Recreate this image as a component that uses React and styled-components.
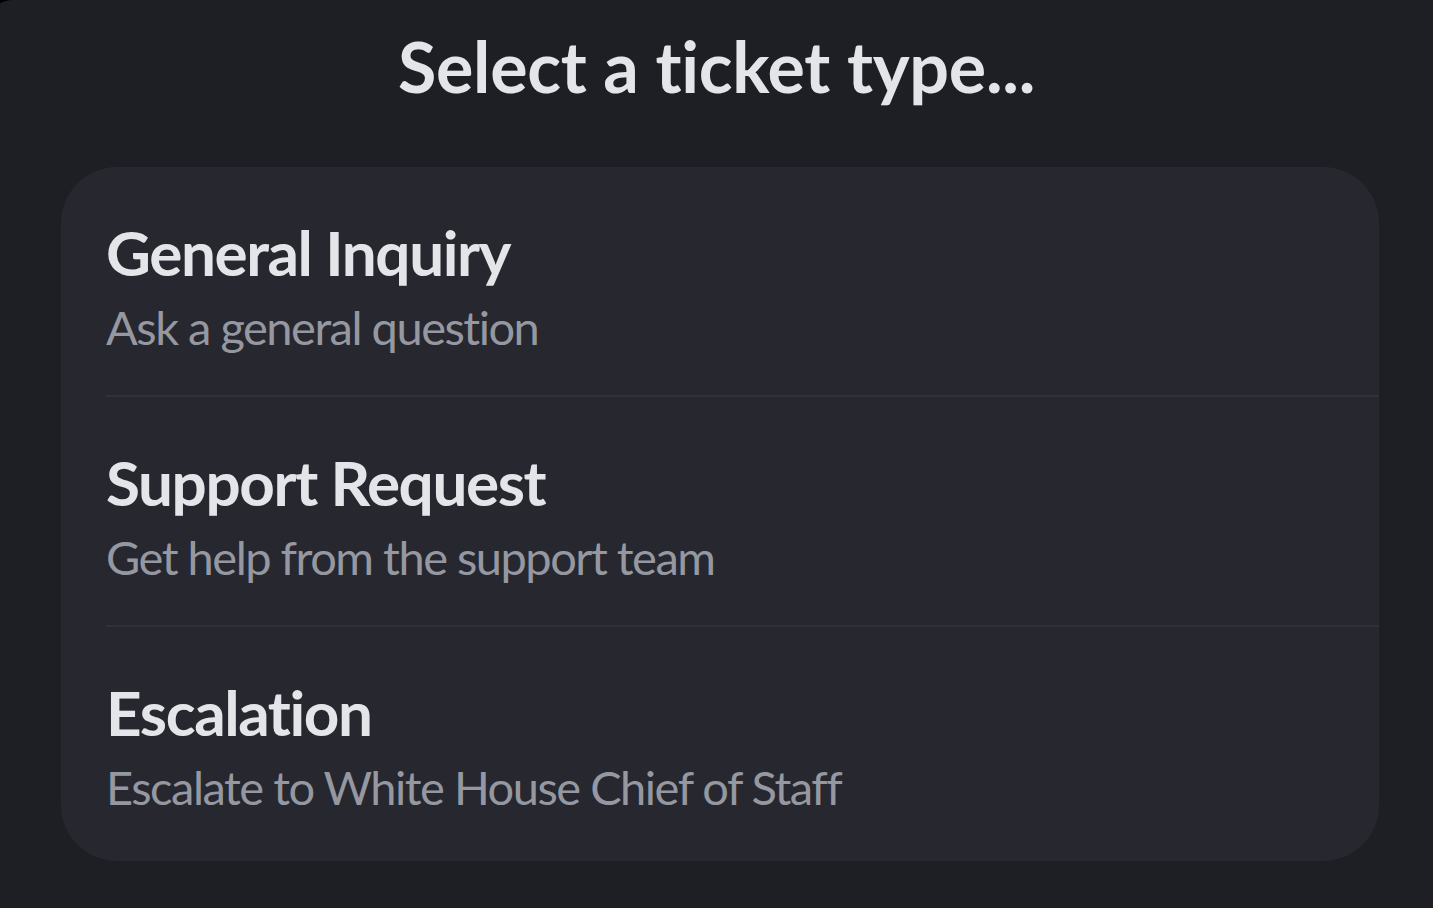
import React from "react";
import styled, { createGlobalStyle } from "styled-components";

const GlobalStyle = createGlobalStyle`
  html, body {
    margin: 0;
    padding: 0;
    background: #000;
    overflow: hidden;
  }
  #root {
    height: 908px;
  }
`;

const Sheet = styled.div`
  box-sizing: border-box;
  height: 908px;
  margin-left: -10px;
  padding-top: 24px;
  background: #1e1f24;
  border-top-left-radius: 22px;
  font-family: Lato, "Noto Sans", sans-serif;
  font-variant-ligatures: none;
  display: flex;
  flex-direction: column;
`;

const Title = styled.h1`
  margin: 0 0 0 10px;
  font-size: 70px;
  line-height: 84px;
  font-weight: 700;
  letter-spacing: -0.25px;
  color: #e4e5e9;
  text-align: center;
`;

const Card = styled.div`
  margin: 59px 54px 0 71px;
  padding-bottom: 6px;
  background: #27282f;
  border-radius: 56px;
  overflow: hidden;
  display: flex;
  flex-direction: column;
`;

const Option = styled.div`
  margin-left: 45px;
  padding: 48px 0 39px;
  border-top: ${(p) => (p.$first ? "none" : "2px solid #313239")};
  display: flex;
  flex-direction: column;
  gap: 9px;
  cursor: pointer;
`;

const Name = styled.div`
  font-size: 62px;
  line-height: 74px;
  font-weight: 700;
  letter-spacing: -1.4px;
  color: #e4e5e9;
`;

const Hint = styled.div`
  font-size: 47px;
  line-height: 58px;
  font-weight: 400;
  letter-spacing: -1.5px;
  color: #9698a1;
`;

const options = [
  { name: "General Inquiry", hint: "Ask a general question" },
  { name: "Support Request", hint: "Get help from the support team" },
  { name: "Escalation", hint: "Escalate to White House Chief of Staff" },
];

export default function App() {
  return (
    <>
      <GlobalStyle />
      <Sheet>
        <Title>Select a ticket type...</Title>
        <Card>
          {options.map((o, i) => (
            <Option key={o.name} $first={i === 0}>
              <Name>{o.name}</Name>
              <Hint>{o.hint}</Hint>
            </Option>
          ))}
        </Card>
      </Sheet>
    </>
  );
}
